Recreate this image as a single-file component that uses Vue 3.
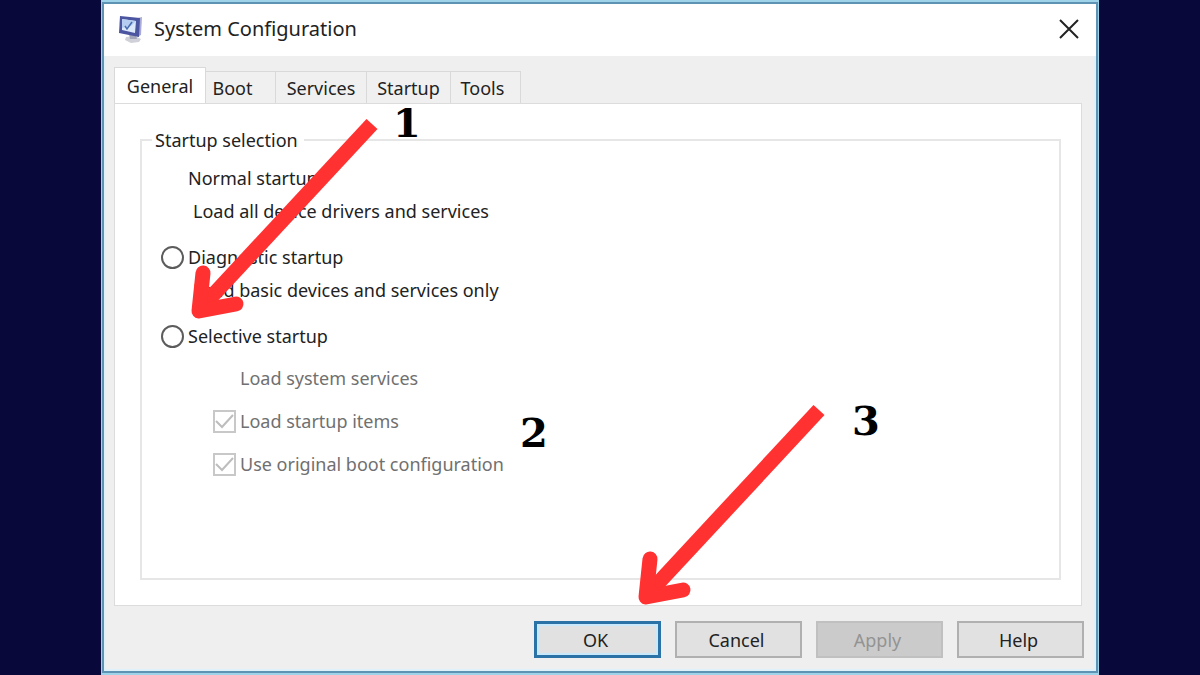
<script setup>
import { ref } from 'vue'

const tabs = ['General', 'Boot', 'Services', 'Startup', 'Tools']
const activeTab = ref('General')
const mode = ref('')
const startupItems = ref(true)
const originalBoot = ref(true)
const markers = [
  { number: 1, name: 'one' },
  { number: 2, name: 'two' },
  { number: 3, name: 'three' },
]
</script>

<template>
  <main class="page">
    <section class="dialog" aria-labelledby="dialog-title">
      <header class="titlebar">
        <svg class="app-icon" viewBox="0 0 26 28" aria-hidden="true">
          <path d="M8 22l9-1 6 3-2 3-8 1-6-3z" fill="#cfd0d8" />
          <path d="M11 19l7 1 1 4-7 0z" fill="#a3a5b8" />
          <path d="M20 3l4-1-1 18-4 2z" fill="#a9abd6" />
          <path d="M2 1l20 2-1 19-20-4z" fill="#4b55a0" />
          <path d="M4 4l14 2-1 12-13-3z" fill="#dce9fa" />
          <path d="M4 4l14 2-5 5-9 2z" fill="#b4cdf0" />
          <path d="M7 11l2 3 5-7" fill="none" stroke="#4a6db0" stroke-width="1.5" />
        </svg>
        <h1 id="dialog-title">System Configuration</h1>
        <button class="close" type="button" aria-label="Close">
          <svg viewBox="0 0 20 20" aria-hidden="true">
            <path d="M1 1l18 18M19 1L1 19" fill="none" stroke="#222" stroke-width="2" />
          </svg>
        </button>
      </header>

      <div class="tabs" role="tablist">
        <button
          v-for="tab in tabs"
          :key="tab"
          type="button"
          role="tab"
          :class="['tab', tab.toLowerCase(), { active: tab === activeTab }]"
          :aria-selected="tab === activeTab"
          @click="activeTab = tab"
        >{{ tab }}</button>
      </div>

      <div class="panel" role="tabpanel">
        <fieldset class="group">
          <legend>Startup selection</legend>
          <div class="choice">
            <p class="row plain">Normal startup</p>
            <p class="row note">Load all device drivers and services</p>
          </div>
          <div class="choice">
            <label class="row"><input v-model="mode" type="radio" name="mode" value="diagnostic" />Diagnostic startup</label>
            <p class="row note">Load basic devices and services only</p>
          </div>
          <div class="choice">
            <label class="row"><input v-model="mode" type="radio" name="mode" value="selective" />Selective startup</label>
          </div>
          <div class="options">
            <p class="row plain">Load system services</p>
            <label class="row"><span class="check"><input v-model="startupItems" type="checkbox" disabled /><svg viewBox="0 0 23 23" aria-hidden="true"><path d="M3 11l6 6L20 5" /></svg></span>Load startup items</label>
            <label class="row"><span class="check"><input v-model="originalBoot" type="checkbox" disabled /><svg viewBox="0 0 23 23" aria-hidden="true"><path d="M3 11l6 6L20 5" /></svg></span>Use original boot configuration</label>
          </div>
        </fieldset>
      </div>

      <footer class="actions">
        <button class="action primary" type="button">OK</button>
        <button class="action" type="button">Cancel</button>
        <button class="action" type="button" disabled>Apply</button>
        <button class="action" type="button">Help</button>
      </footer>

      <svg v-for="n in 2" :key="n" :class="['arrow', 'arrow-' + n]" viewBox="0 0 190 204" aria-hidden="true">
        <path d="M182 9L11 193" stroke-linecap="butt" />
        <path d="M13 158L9 196L46 189" stroke-linecap="round" stroke-linejoin="round" />
      </svg>
      <span v-for="m in markers" :key="m.name" :class="['marker', m.name]">{{ m.number }}</span>
    </section>
  </main>
</template>

<style>
body {
  margin: 0;
  background: #08093a;
}
</style>

<style scoped>
* {
  box-sizing: border-box;
}

.page {
  min-height: 100vh;
  display: flex;
  padding: 0 101px;
  background: #08093a;
  font-family: "Noto Sans", "Open Sans", sans-serif;
  font-size: 18px;
  line-height: 24px;
  color: #222;
}

.dialog {
  position: relative;
  flex: 1;
  display: flex;
  flex-direction: column;
  background: #efefef;
  border: 2px solid #9fd3ea;
  border-width: 2px 1px 2px 1px;
  box-shadow: inset 0 0 0 2px #5f93b3, inset 0 0 0 4px #dff2fb;
}

.titlebar {
  display: flex;
  align-items: center;
  height: 52px;
  margin: 2px 2px 0;
  padding: 0 17px 2px 14px;
  background: #fff;
}

.app-icon {
  width: 26px;
  height: 28px;
}

h1 {
  flex: 1;
  margin: 0 0 0 10px;
  font-size: 20px;
  font-weight: 400;
}

button {
  font: inherit;
  color: inherit;
}

.close {
  display: flex;
  padding: 0;
  border: 0;
  background: none;
}

.close svg {
  width: 20px;
  height: 20px;
}

.tabs {
  display: flex;
  align-items: flex-end;
  height: 47px;
  margin: 0 12px;
}

.tab {
  height: 32px;
  padding: 0;
  border: 1px solid #d9d9d9;
  border-width: 1px 1px 0 0;
  background: #f0f0f0;
}

.tab.active {
  width: 92px;
  height: 36px;
  border-left-width: 1px;
  background: #fff;
}

.boot {
  width: 70px;
  padding-right: 16px;
}

.services {
  width: 91px;
}

.startup {
  width: 84px;
}

.tools {
  width: 70px;
  padding-right: 6px;
}

.panel {
  flex: 1;
  display: flex;
  margin: 0 16px 0 12px;
  padding: 24px 20px 25px 25px;
  border: 1px solid #dcdcdc;
  background: #fff;
}

.group {
  flex: 1;
  min-width: 0;
  margin: 0;
  padding: 14px 20px 0 19px;
  border: 2px solid #e6e6e6;
}

legend {
  margin-left: -9px;
  padding: 0 6px 0 3px;
}

.choice {
  display: grid;
  gap: 9px;
  margin-bottom: 22px;
}

.row {
  display: flex;
  align-items: center;
  gap: 4px;
  margin: 0;
}

.plain {
  padding-left: 27px;
}

.note {
  padding-left: 32px;
}

input {
  appearance: none;
  width: 23px;
  height: 23px;
  margin: 0;
  border: 2px solid #5c5c5c;
  background: #fff;
}

input[type="radio"] {
  border-radius: 50%;
}

input[type="radio"]:checked {
  background: radial-gradient(#333 5px, #fff 6px);
}

input[type="checkbox"] {
  border-color: #c8c8c8;
}

.options {
  display: grid;
  gap: 19px;
  margin-top: -4px;
  padding-left: 52px;
  color: #707070;
}

.check {
  position: relative;
  display: flex;
}

.check svg {
  position: absolute;
  inset: 0;
  fill: none;
  stroke: #bdbdbd;
  stroke-width: 2;
}

.check input:not(:checked) + svg {
  display: none;
}

.actions {
  display: flex;
  justify-content: flex-end;
  gap: 14px;
  padding: 15px 14px 15px 0;
}

.action {
  width: 127px;
  height: 37px;
  padding: 0 4px 0 0;
  border: 2px solid #b0b0b0;
  background: #e1e1e1;
}

.primary {
  border: 3px solid #2b72a6;
  box-shadow: inset 0 0 0 2px #c9e9fa;
}

.action:disabled {
  border-color: #c0c0c0;
  background: #cbcbcb;
  color: #939393;
}

.arrow {
  position: absolute;
  width: 190px;
  height: 204px;
  fill: none;
  stroke: #ff3131;
  stroke-width: 15;
}

.arrow-1 {
  left: 88px;
  top: 113px;
}

.arrow-2 {
  left: 535px;
  top: 399px;
}

.marker {
  position: absolute;
  font: bold 40px/48px "DejaVu Serif", serif;
  color: #000;
}

.one {
  left: 291px;
  top: 97px;
}

.two {
  left: 418px;
  top: 407px;
}

.three {
  left: 750px;
  top: 395px;
}
</style>
